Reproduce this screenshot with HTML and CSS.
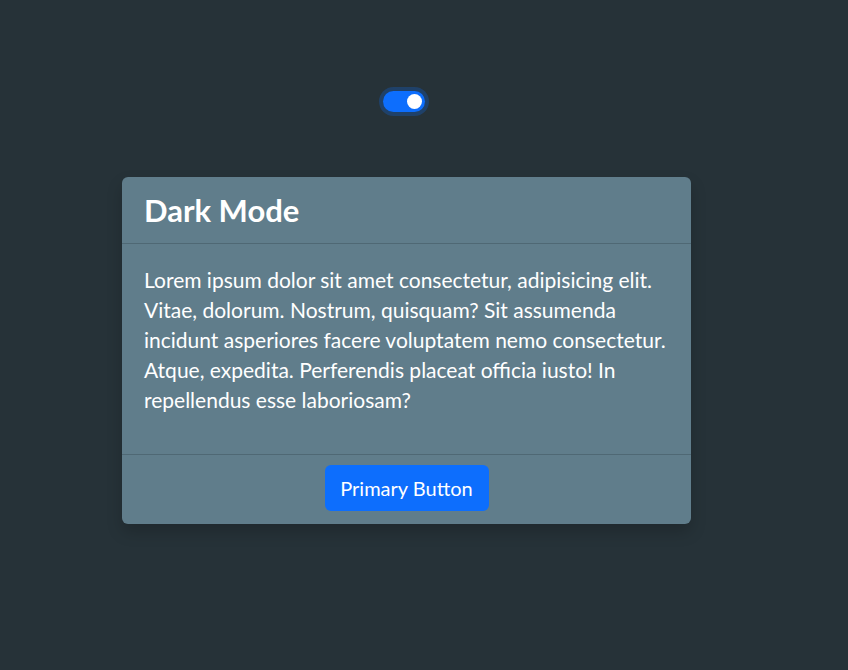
FILE: index.html
```html
<!DOCTYPE html>
<html lang="en">
<head>
<meta charset="utf-8">
<title>Dark Mode</title>
<link rel="stylesheet" href="styles.css">
</head>
<body>
<main class="page">
  <div class="switch-row">
    <span class="switch" role="switch" aria-checked="true"><span class="knob"></span></span>
  </div>
  <section class="card">
    <header class="card-header">
      <h2 class="card-title">Dark Mode</h2>
    </header>
    <div class="card-body">
      <p class="card-text">Lorem ipsum dolor sit amet consectetur, adipisicing elit. Vitae, dolorum. Nostrum, quisquam? Sit assumenda incidunt asperiores facere voluptatem nemo consectetur. Atque, expedita. Perferendis placeat officia iusto! In repellendus esse laboriosam?</p>
    </div>
    <footer class="card-footer">
      <button class="btn-primary" type="button">Primary Button</button>
    </footer>
  </section>
</main>
</body>
</html>
```

FILE: styles.css
```css
html, body {
  margin: 0;
  padding: 0;
  height: 100%;
  background: #263238;
}
body {
  font-family: Lato, "Noto Sans", sans-serif;
  color: #fff;
}
.page {
  width: 813px;
  display: flex;
  flex-direction: column;
  align-items: center;
  padding-top: 87px;
}
.switch-row {
  display: flex;
  justify-content: center;
  margin-right: 5px;
}
.switch {
  box-sizing: border-box;
  width: 42px;
  height: 21px;
  border-radius: 11px;
  background: #0d6efd;
  box-shadow: 0 0 0 4px rgba(13, 110, 253, 0.25);
  display: flex;
  align-items: center;
  justify-content: flex-end;
  padding-right: 3px;
  margin: 4px;
}
.knob {
  width: 15px;
  height: 15px;
  border-radius: 50%;
  background: #fff;
}
.card {
  margin-top: 61px;
  width: 569px;
  background: #607d8b;
  border-radius: 6px;
  box-shadow: 0 8px 16px rgba(0, 0, 0, 0.18);
  overflow: hidden;
}
.card-header {
  height: 67px;
  box-sizing: border-box;
  padding: 1px 22px 0;
  display: flex;
  align-items: center;
  border-bottom: 1px solid #4f6874;
}
.card-title {
  margin: 0;
  font-size: 31px;
  font-weight: 700;
  line-height: 1.2;
}
.card-body {
  padding: 21px 22px 39px;
}
.card-text {
  margin: 0;
  font-size: 21px;
  line-height: 30px;
}
.card-footer {
  border-top: 1px solid #4f6874;
  padding: 10px 22px 13px;
  display: flex;
  justify-content: center;
}
.btn-primary {
  font-family: inherit;
  font-size: 20px;
  color: #fff;
  background: #0d6efd;
  border: none;
  border-radius: 6px;
  width: 164px;
  height: 46px;
  padding: 0;
}
```
